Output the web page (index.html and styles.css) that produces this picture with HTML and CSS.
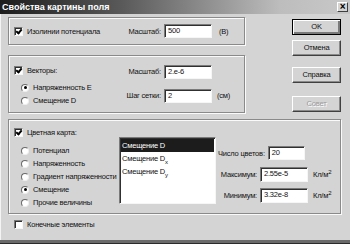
FILE: index.html
```html
<!DOCTYPE html>
<html lang="ru">
  <head>
    <meta charset="UTF-8" />
    <title>Свойства картины поля</title>
    <link rel="stylesheet" href="styles.css">
  </head>
  <body class="body">
    <div class="dialog">
      <div class="titlebar">
        <span class="titlebar__text">Свойства картины поля</span>
        <span class="titlebar__close">&#215;</span>
      </div>
      <div class="content">
        <div class="top">
          <div class="left">
            <div class="frame frame_iso">
              <div class="lead">
                <span class="check check_on"></span>
                <span class="check__label">Изолинии потенциала</span>
              </div>
              <span class="field__label">Масштаб:</span>
              <span class="edit edit_wide">500</span>
              <span class="unit unit_iso">(В)</span>
            </div>
            <div class="frame frame_vec">
              <div class="lead lead_col">
                <div class="line">
                  <span class="check check_on"></span>
                  <span class="check__label">Векторы:</span>
                </div>
                <div class="line line_radio line_first">
                  <span class="radio radio_on"></span>
                  <span class="check__label">Напряженность E</span>
                </div>
                <div class="line line_radio">
                  <span class="radio"></span>
                  <span class="check__label">Смещение D</span>
                </div>
              </div>
              <div class="fields">
                <div class="fields__row">
                  <span class="field__label">Масштаб:</span>
                  <span class="edit edit_wide">2.e-6</span>
                </div>
                <div class="fields__row fields__row_second">
                  <span class="field__label">Шаг сетки:</span>
                  <span class="edit edit_wide">2</span>
                  <span class="unit">(см)</span>
                </div>
              </div>
            </div>
          </div>
          <div class="buttons">
            <div class="button button_default">OK</div>
            <div class="button button_cancel">Отмена</div>
            <div class="button button_help">Справка</div>
            <div class="button button_tip button_disabled">Совет</div>
          </div>
        </div>
        <div class="frame frame_map">
          <div class="map__left">
            <div class="line">
              <span class="check check_on"></span>
              <span class="check__label">Цветная карта:</span>
            </div>
            <div class="line line_radio line_gap">
              <span class="radio"></span>
              <span class="check__label">Потенциал</span>
            </div>
            <div class="line line_radio">
              <span class="radio"></span>
              <span class="check__label">Напряженность</span>
            </div>
            <div class="line line_radio">
              <span class="radio"></span>
              <span class="check__label">Градиент напряженности</span>
            </div>
            <div class="line line_radio">
              <span class="radio radio_on"></span>
              <span class="check__label">Смещение</span>
            </div>
            <div class="line line_radio">
              <span class="radio"></span>
              <span class="check__label">Прочие величины</span>
            </div>
          </div>
          <ul class="list">
            <li class="list__item list__item_selected">Смещение D</li>
            <li class="list__item">Смещение D<sub>x</sub></li>
            <li class="list__item">Смещение D<sub>y</sub></li>
          </ul>
          <div class="map__right">
            <div class="range range_count">
              <span class="range__label range__label_count">Число цветов:</span>
              <span class="edit edit_count">20</span>
            </div>
            <div class="range range_max">
              <span class="range__label">Максимум:</span>
              <span class="edit edit_wide">2.55e-5</span>
              <span class="unit">Кл/м<sup>2</sup></span>
            </div>
            <div class="range range_min">
              <span class="range__label">Минимум:</span>
              <span class="edit edit_wide">3.32e-8</span>
              <span class="unit">Кл/м<sup>2</sup></span>
            </div>
          </div>
        </div>
        <div class="line line_final">
          <span class="check"></span>
          <span class="check__label">Конечные элементы</span>
        </div>
      </div>
    </div>
  </body>
</html>
```

FILE: styles.css
```css
.body {
  margin: 0;
  background-color: #d4d4d4;
  font-family: "Liberation Sans", Arial, sans-serif;
  font-size: 7.5px;
  letter-spacing: -0.2px;
  color: #111;
}
.dialog {
  width: 350px;
  height: 244px;
  box-sizing: border-box;
  background-color: #d4d4d4;
  box-shadow: inset 0 -1px 0 #2a2a2a, inset 0 -4px 0 #6a6a6a, inset 1px 0 0 #f4f4f4;
  overflow: hidden;
}
.titlebar {
  height: 14px;
  display: flex;
  align-items: center;
  justify-content: space-between;
  background: linear-gradient(to right, #1c1c1c, #5a5a5a 35%, #bdbdbd 80%, #c8c8c8);
}
.titlebar__text {
  color: #fff;
  font-weight: bold;
  font-size: 9px;
  letter-spacing: 0;
  padding-left: 2px;
  line-height: 14px;
}
.titlebar__close {
  width: 11px;
  height: 10px;
  margin-right: 2px;
  box-sizing: border-box;
  background-color: #d4d4d4;
  border: 1px solid;
  border-color: #fff #404040 #404040 #fff;
  font-size: 10px;
  font-weight: bold;
  line-height: 7px;
  text-align: center;
  color: #000;
}
.content {
  padding: 3px 9px 0 8px;
}
.top {
  display: flex;
  justify-content: space-between;
  height: 95px;
}
.left {
  width: 237px;
}
.frame {
  box-sizing: border-box;
  border: 1px solid #8a8a8a;
  box-shadow: 1px 1px 0 #fafafa, inset 1px 1px 0 #fafafa;
}
.frame_iso {
  height: 28px;
  display: flex;
  align-items: center;
  padding-left: 5px;
}
.frame_vec {
  height: 58px;
  margin-top: 10px;
  display: flex;
  align-items: flex-start;
  padding: 8px 0 0 5px;
}
.lead {
  width: 110px;
  display: flex;
  align-items: center;
}
.lead_col {
  flex-direction: column;
  align-items: flex-start;
}
.line {
  height: 13px;
  display: flex;
  align-items: center;
}
.line_radio {
  margin-left: 7px;
}
.line_first {
  margin-top: 4px;
}
.line_gap {
  margin-top: 5px;
}
.line_final {
  margin-top: 4px;
  padding-left: 6px;
}
.check {
  width: 9px;
  height: 9px;
  box-sizing: border-box;
  background-color: #fff;
  border: 1px solid;
  border-color: #7a7a7a #f6f6f6 #f6f6f6 #7a7a7a;
  box-shadow: inset 1px 1px 0 #303030;
  position: relative;
  flex-shrink: 0;
}
.check_on::after {
  content: "";
  position: absolute;
  left: 1px;
  top: 0px;
  width: 2px;
  height: 4px;
  border: solid #000;
  border-width: 0 2px 2px 0;
  transform: translate(1px, 0) rotate(40deg);
}
.check__label {
  margin-left: 4px;
  white-space: nowrap;
}
.radio {
  width: 8px;
  height: 8px;
  box-sizing: border-box;
  border-radius: 50%;
  background-color: #fff;
  border: 1px solid;
  border-color: #6a6a6a #eee #eee #6a6a6a;
  position: relative;
  flex-shrink: 0;
}
.radio_on::after {
  content: "";
  position: absolute;
  left: 1.5px;
  top: 1.5px;
  width: 3px;
  height: 3px;
  border-radius: 50%;
  background-color: #000;
}
.field__label {
  width: 40px;
  padding-right: 3px;
  box-sizing: border-box;
  text-align: right;
  white-space: nowrap;
}
.edit {
  height: 14px;
  box-sizing: border-box;
  background-color: #fff;
  border: 1px solid;
  border-color: #7a7a7a #f6f6f6 #f6f6f6 #7a7a7a;
  box-shadow: inset 1px 1px 0 #303030;
  padding-left: 3px;
  line-height: 12px;
}
.edit_wide {
  width: 48px;
}
.edit_count {
  width: 37px;
  margin-left: 3px;
}
.unit {
  margin-left: 5px;
  white-space: nowrap;
}
.unit_iso {
  margin-left: 7px;
}
.fields__row {
  display: flex;
  align-items: center;
  height: 13px;
  margin-top: 1px;
}
.fields__row_second {
  margin-top: 11px;
}
.buttons {
  width: 49px;
  display: flex;
  flex-direction: column;
}
.button {
  height: 16px;
  box-sizing: border-box;
  border: 1px solid;
  border-color: #fff #404040 #404040 #fff;
  box-shadow: inset -1px -1px 0 #8a8a8a;
  text-align: center;
  line-height: 14px;
}
.button_default {
  margin-top: 2px;
  border: 1px solid #000;
  box-shadow: inset 1px 1px 0 #fff, inset -2px -2px 0 #7a7a7a;
}
.button_cancel {
  margin-top: 5px;
}
.button_help {
  margin-top: 11px;
}
.button_tip {
  margin-top: 13px;
}
.button_disabled {
  color: #9a9a9a;
  text-shadow: 1px 1px 0 #fff;
}
.frame_map {
  height: 95px;
  margin-top: 7px;
  display: flex;
  align-items: flex-start;
  padding: 6px 0 0 5px;
}
.map__left {
  width: 105px;
}
.list {
  list-style: none;
  margin: 11px 0 0 0;
  padding: 0;
  width: 97px;
  height: 67px;
  box-sizing: border-box;
  background-color: #fff;
  border: 1px solid;
  border-color: #7a7a7a #f6f6f6 #f6f6f6 #7a7a7a;
  box-shadow: inset 1px 1px 0 #303030;
}
.list__item {
  height: 13px;
  line-height: 13px;
  padding-left: 2px;
  white-space: nowrap;
}
.list__item sub {
  font-size: 6px;
  line-height: 0;
}
.list__item_selected {
  background-color: #1c1c1c;
  color: #fff;
  margin: 1px 1px 0 1px;
  padding-left: 1px;
}
.map__right {
  margin-left: 2px;
}
.range {
  display: flex;
  align-items: center;
}
.range_count {
  margin-top: 20px;
}
.range_max {
  margin-top: 7px;
}
.range_min {
  margin-top: 6px;
}
.range__label {
  width: 39px;
  padding-right: 3px;
  text-align: right;
  white-space: nowrap;
}
.range__label_count {
  width: auto;
  padding-right: 0;
}
.range .edit {
  height: 15px;
}
.range_count .edit {
  height: 14px;
}
.unit sup {
  font-size: 6px;
  line-height: 0;
}
```
